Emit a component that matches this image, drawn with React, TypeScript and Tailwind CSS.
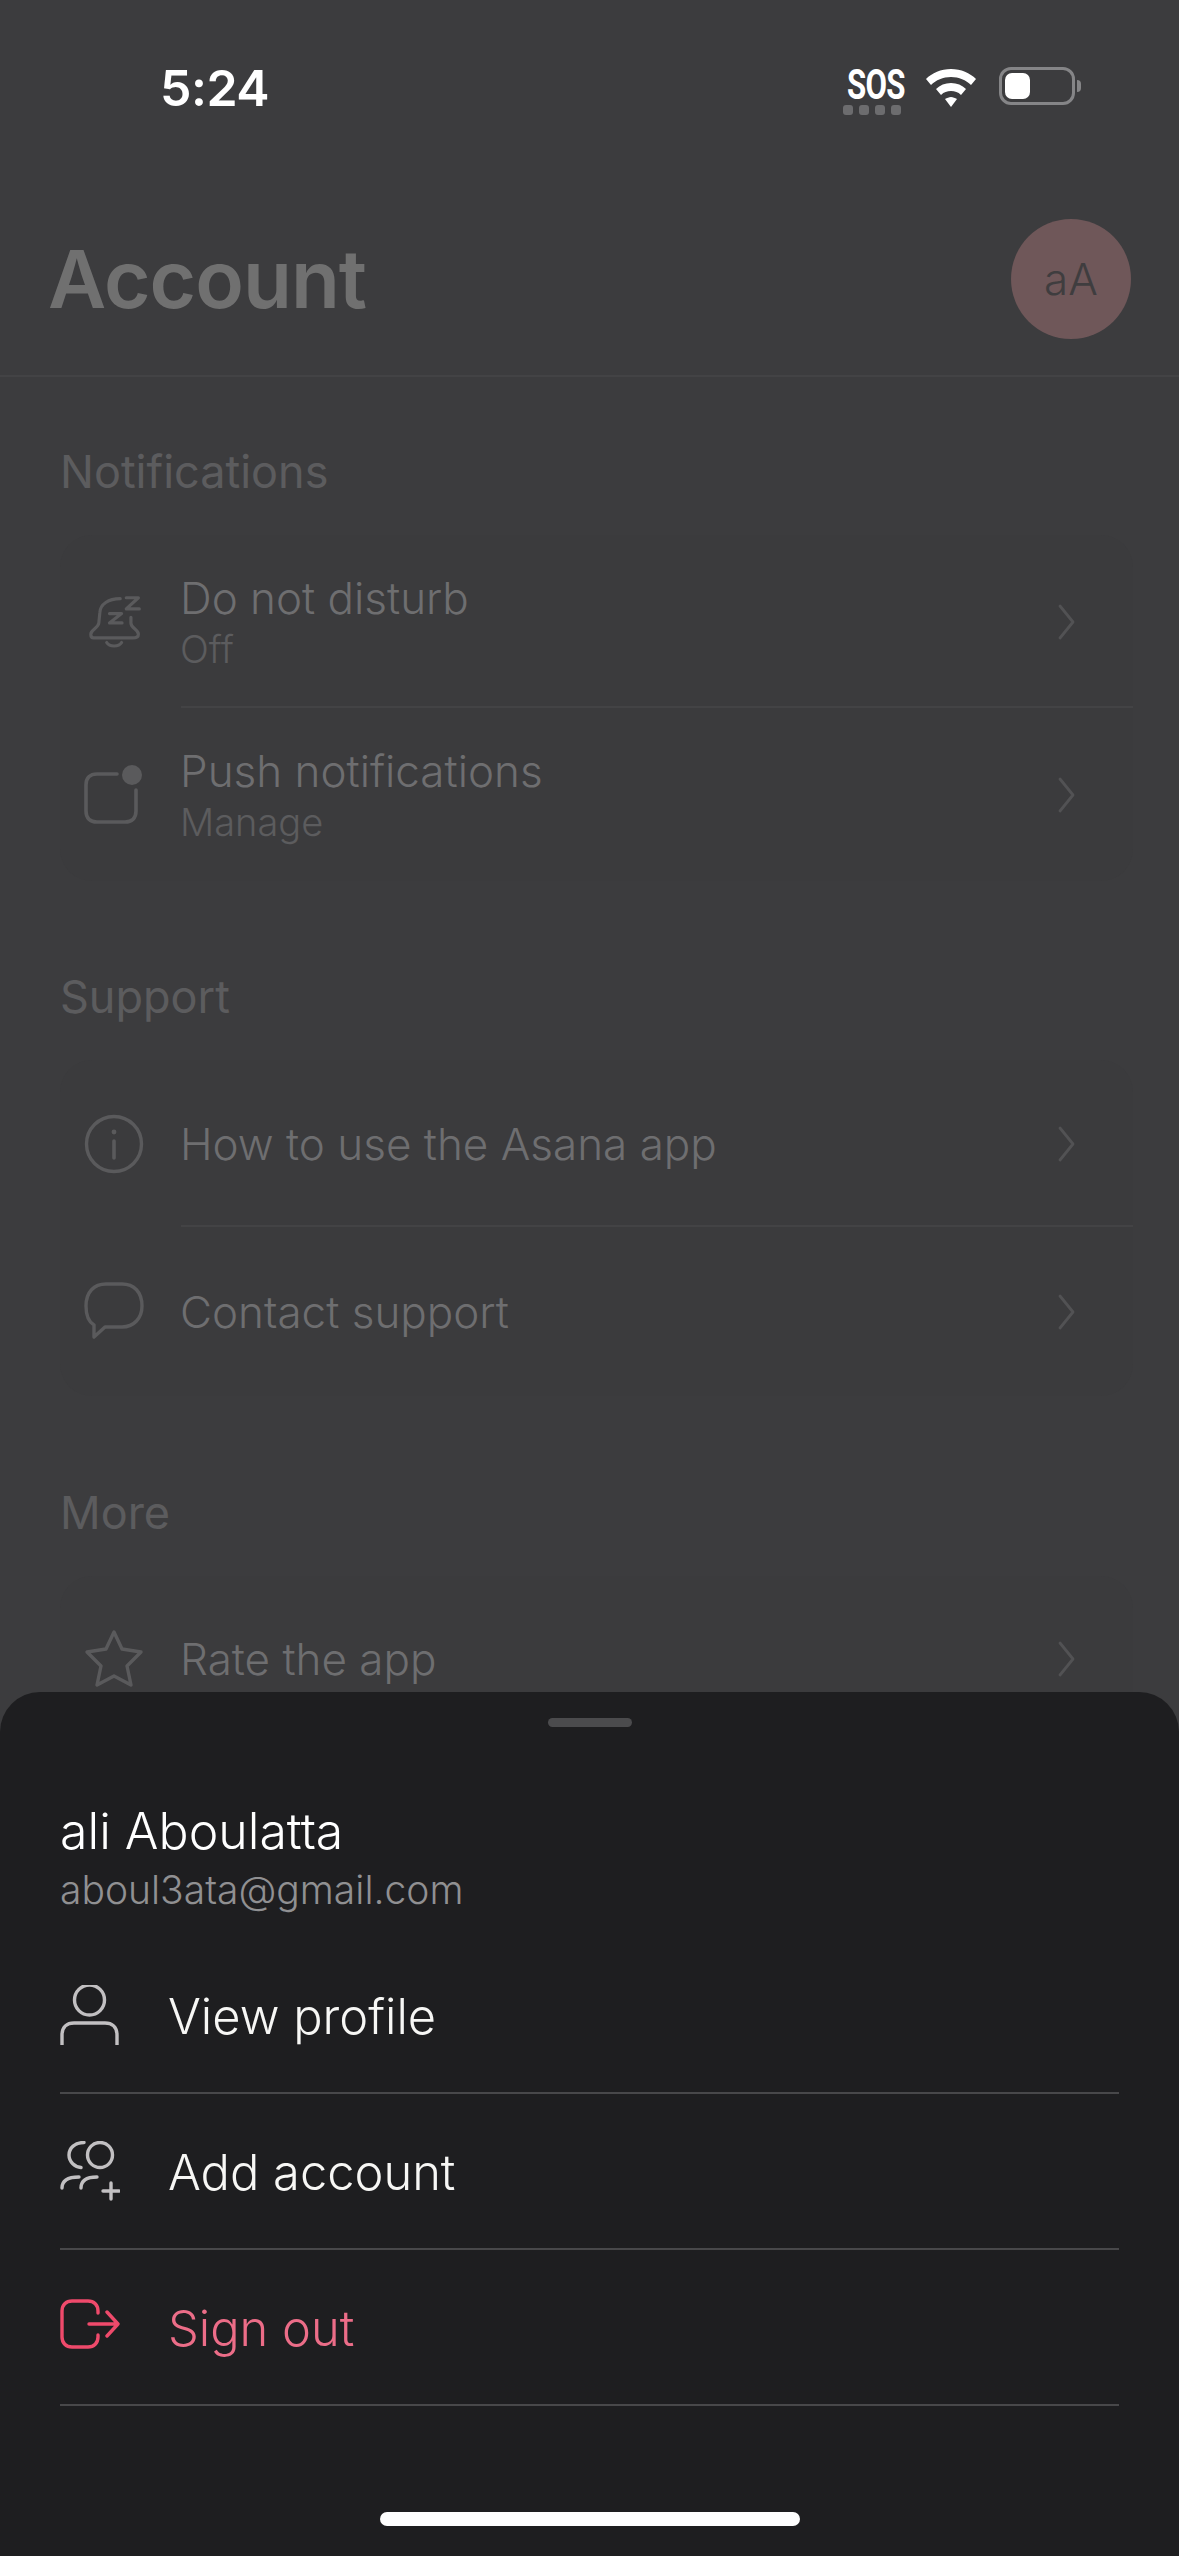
import React from "react";

function Chevron() {
  return (
    <svg width="20" height="36" viewBox="0 0 20 36" fill="none" stroke="#525254" strokeWidth="2.8" strokeLinecap="round" strokeLinejoin="round">
      <path d="M3 2 L16 18 L3 34" />
    </svg>
  );
}

function Bell() {
  return (
    <svg className="ml-[4px]" width="60" height="60" viewBox="0 0 60 60" fill="none" stroke="#5a5a5c" strokeWidth="3.4" strokeLinecap="round" strokeLinejoin="round">
      <path d="M34.5 5 C22 5 13 11 12.7 20 L11.6 31 C11 37 3 38 3 43 C3 46 4 47 6 47 L48 47 C52 47 54 46 54 43 C54 38 46 37 46 31 L46 25" />
      <path d="M20 52 C23 57 33 57 36 52" />
      <path d="M23 21 H36 L23 31 H36.5" />
      <path d="M41 4 H54 L41 16 H55" />
    </svg>
  );
}

function Push() {
  return (
    <svg width="60" height="60" viewBox="0 0 60 60" fill="none" stroke="#5a5a5c" strokeWidth="3.6" strokeLinecap="round">
      <path d="M33 9 H13 C6 9 2 13 2 20 V46 C2 53 6 57 13 57 H41 C48 57 52 53 52 46 V25" />
      <circle cx="48" cy="10" r="10" fill="#5a5a5c" stroke="none" />
    </svg>
  );
}

function Info() {
  return (
    <svg width="60" height="60" viewBox="0 0 60 60" fill="none" stroke="#5a5a5c" strokeWidth="3.4" strokeLinecap="round">
      <circle cx="30" cy="30" r="27.5" />
      <path d="M30 27 V44" strokeWidth="3.6" />
      <circle cx="30" cy="18" r="2.4" fill="#5a5a5c" stroke="none" />
    </svg>
  );
}

function Bubble() {
  return (
    <svg width="60" height="60" viewBox="0 0 60 60" fill="none" stroke="#5a5a5c" strokeWidth="3.4" strokeLinejoin="round">
      <path d="M22 2 H38 C50 2 58 10 58 24 C58 36 50 45 38 45 H21 L10 55 V43 C5 40 2 33 2 24 C2 10 10 2 22 2 Z" />
    </svg>
  );
}

function Star() {
  return (
    <svg width="60" height="60" viewBox="0 0 60 60" fill="none" stroke="#5a5a5c" strokeWidth="3.4" strokeLinejoin="round">
      <path d="M30 3 L38 20 L57 23 L43 37 L47 56 L30 47 L13 56 L17 37 L3 23 L22 20 Z" />
    </svg>
  );
}

function Person() {
  return (
    <svg width="60" height="60" viewBox="0 0 60 60" fill="none" stroke="#c2c0c2" strokeWidth="3.4">
      <circle cx="29.5" cy="15" r="15" />
      <path d="M2 60 V50 C2 42 7 38 14 38 H45 C52 38 57 42 57 50 V60" />
    </svg>
  );
}

function People() {
  return (
    <svg width="60" height="60" viewBox="0 0 60 60" fill="none" stroke="#c2c0c2" strokeWidth="3.4" strokeLinecap="round">
      <circle cx="40" cy="14" r="12.5" />
      <path d="M24 1.5 C15 1.5 9 7 9 14 C9 21 15 26 21 26.5" />
      <path d="M2 47 C2 40 8 36 19 36" />
      <path d="M21 47 C21 40 26 36 37 36" />
      <path d="M51 42 V58 M43 50 H59" />
    </svg>
  );
}

function SignOut() {
  return (
    <svg className="mt-[-6px]" width="60" height="50" viewBox="0 0 60 50" fill="none" stroke="#ef4a6b" strokeWidth="3.4" strokeLinecap="round" strokeLinejoin="round">
      <path d="M38 14 V12 C38 6 34 2 28 2 H12 C6 2 2 6 2 12 V38 C2 44 6 48 12 48 H28 C34 48 38 44 38 38 V36" />
      <path d="M29 25 H58 M47 13 L58 25 L47 37" />
    </svg>
  );
}

function Row({ icon, title, sub, height, divider }: { icon: React.ReactNode; title: string; sub?: string; height: string; divider?: boolean }) {
  return (
    <div className={`relative flex items-center pl-[24px] pr-[56px] ${height}`}>
      <div className="flex w-[60px] justify-center">{icon}</div>
      <div className="ml-[36px] flex flex-1 flex-col justify-center">
        <div className="text-[44px] font-[350] leading-[52px] text-[#6e6e70]">{title}</div>
        {sub && <div className="mt-[3px] text-[38px] font-[350] leading-[44px] text-[#5c5c5e]">{sub}</div>}
      </div>
      <Chevron />
      {divider && <div className="absolute bottom-0 left-[121px] right-0 h-[2px] bg-[#434345]" />}
    </div>
  );
}

function SheetRow({ icon, label, red }: { icon: React.ReactNode; label: string; red?: boolean }) {
  return (
    <div className="flex h-[156px] items-center border-b-2 border-[#48484a]">
      <div className="flex w-[60px] justify-center">{icon}</div>
      <div className={`ml-[48px] mt-[3px] text-[48.8px] font-[350] ${red ? "text-[#ec6d88]" : "text-[#f7f7f5]"}`}>{label}</div>
    </div>
  );
}

function Section({ title, top, children }: { title: string; top: string; children: React.ReactNode }) {
  return (
    <div className={top}>
      <div className="text-[45px] font-normal leading-[50px] text-[#5c5c5e]">{title}</div>
      <div className="mt-[38px] rounded-[32px] bg-[#3b3b3d]">{children}</div>
    </div>
  );
}

export default function App() {
  return (
    <div className="relative h-[2556px] w-[1179px] overflow-hidden bg-[#3c3c3e] font-['Inter',sans-serif]">
      {/* status bar */}
      <div className="flex h-[172px] items-start pl-[160px] pr-[98px] pt-[60px]">
        <div className="text-[50px] font-semibold leading-[56px] tracking-[-0.5px] text-white">5:24</div>
        <div className="ml-auto flex items-start pt-[7px]">
          <div className="flex flex-col items-center">
            <div className="mt-[2px] w-[64px] origin-center whitespace-nowrap text-center font-['Roboto',sans-serif] text-[40px] font-bold leading-[32px] tracking-[-1px] text-white [transform:scaleX(0.78)_scaleY(1.05)]">SOS</div>
            <div className="mt-[4px] flex gap-[6px]">
              <span className="h-[10px] w-[10px] rounded-[3px] bg-[#6c6c6e]" />
              <span className="h-[10px] w-[10px] rounded-[3px] bg-[#6c6c6e]" />
              <span className="h-[10px] w-[10px] rounded-[3px] bg-[#6c6c6e]" />
              <span className="h-[10px] w-[10px] rounded-[3px] bg-[#6c6c6e]" />
            </div>
          </div>
          <svg className="ml-[21px] mt-[2px]" width="52" height="40" viewBox="0 0 52 40" fill="#ffffff">
            <path d="M26 0 C36 0 45 4 51 10 L46 16 C41 11 34 8 26 8 C18 8 11 11 6 16 L1 10 C7 4 16 0 26 0 Z" />
            <path d="M26 14 C32 14 37 16 41 20 L36 26 C33 23 30 22 26 22 C22 22 19 23 16 26 L11 20 C15 16 20 14 26 14 Z" />
            <path d="M26 28 C28 28 30 29 32 30 L26 38 L20 30 C22 29 24 28 26 28 Z" />
          </svg>
          <div className="ml-[22px] mt-[0px] flex items-center">
            <div className="flex h-[38px] w-[76px] items-center rounded-[12px] border-[3px] border-[#858587] pl-[3px]">
              <div className="h-[26px] w-[25px] rounded-[7px] bg-white" />
            </div>
            <div className="ml-[2px] h-[12px] w-[4px] rounded-r-[4px] bg-[#858587]" />
          </div>
        </div>
      </div>

      {/* header */}
      <div className="flex h-[205px] items-start justify-between border-b-2 border-[#434345] pl-[48px] pr-[48px] pt-[62px]">
        <div className="text-[80px] font-semibold leading-[90px] tracking-[-1px] text-[#707070]">Account</div>
        <div className="mt-[-15px] flex h-[120px] w-[120px] items-center justify-center rounded-full bg-[#6f5759] text-[44px] font-[350] text-[#3f3d3f]">aA</div>
      </div>

      {/* list */}
      <div className="pl-[60px] pr-[46px]">
        <Section title="Notifications" top="mt-[70px]">
          <Row icon={<Bell />} title="Do not disturb" sub="Off" height="h-[173px]" divider />
          <Row icon={<Push />} title="Push notifications" sub="Manage" height="h-[173px]" />
        </Section>
        <Section title="Support" top="mt-[91px]">
          <Row icon={<Info />} title="How to use the Asana app" height="h-[167px]" divider />
          <Row icon={<Bubble />} title="Contact support" height="h-[169px]" />
        </Section>
        <Section title="More" top="mt-[92px]">
          <Row icon={<Star />} title="Rate the app" height="h-[166px]" />
        </Section>
      </div>

      {/* bottom sheet */}
      <div className="absolute bottom-0 left-0 right-0 flex h-[864px] flex-col rounded-t-[40px] bg-[#1e1e20] px-[60px]">
        <div className="mx-auto mt-[26px] h-[9px] w-[84px] rounded-full bg-[#4b4b4d]" />
        <div className="mt-[75px] text-[50px] font-[350] leading-[58px] text-white">ali Aboulatta</div>
        <div className="mt-[8px] text-[39px] font-[350] leading-[44px] text-[#909092]">aboul3ata@gmail.com</div>
        <div className="mt-[26px]">
          <SheetRow icon={<Person />} label="View profile" />
          <SheetRow icon={<People />} label="Add account" />
          <SheetRow icon={<SignOut />} label="Sign out" red />
        </div>
        <div className="absolute bottom-[30px] left-[380px] h-[14px] w-[420px] rounded-full bg-white" />
      </div>
    </div>
  );
}
